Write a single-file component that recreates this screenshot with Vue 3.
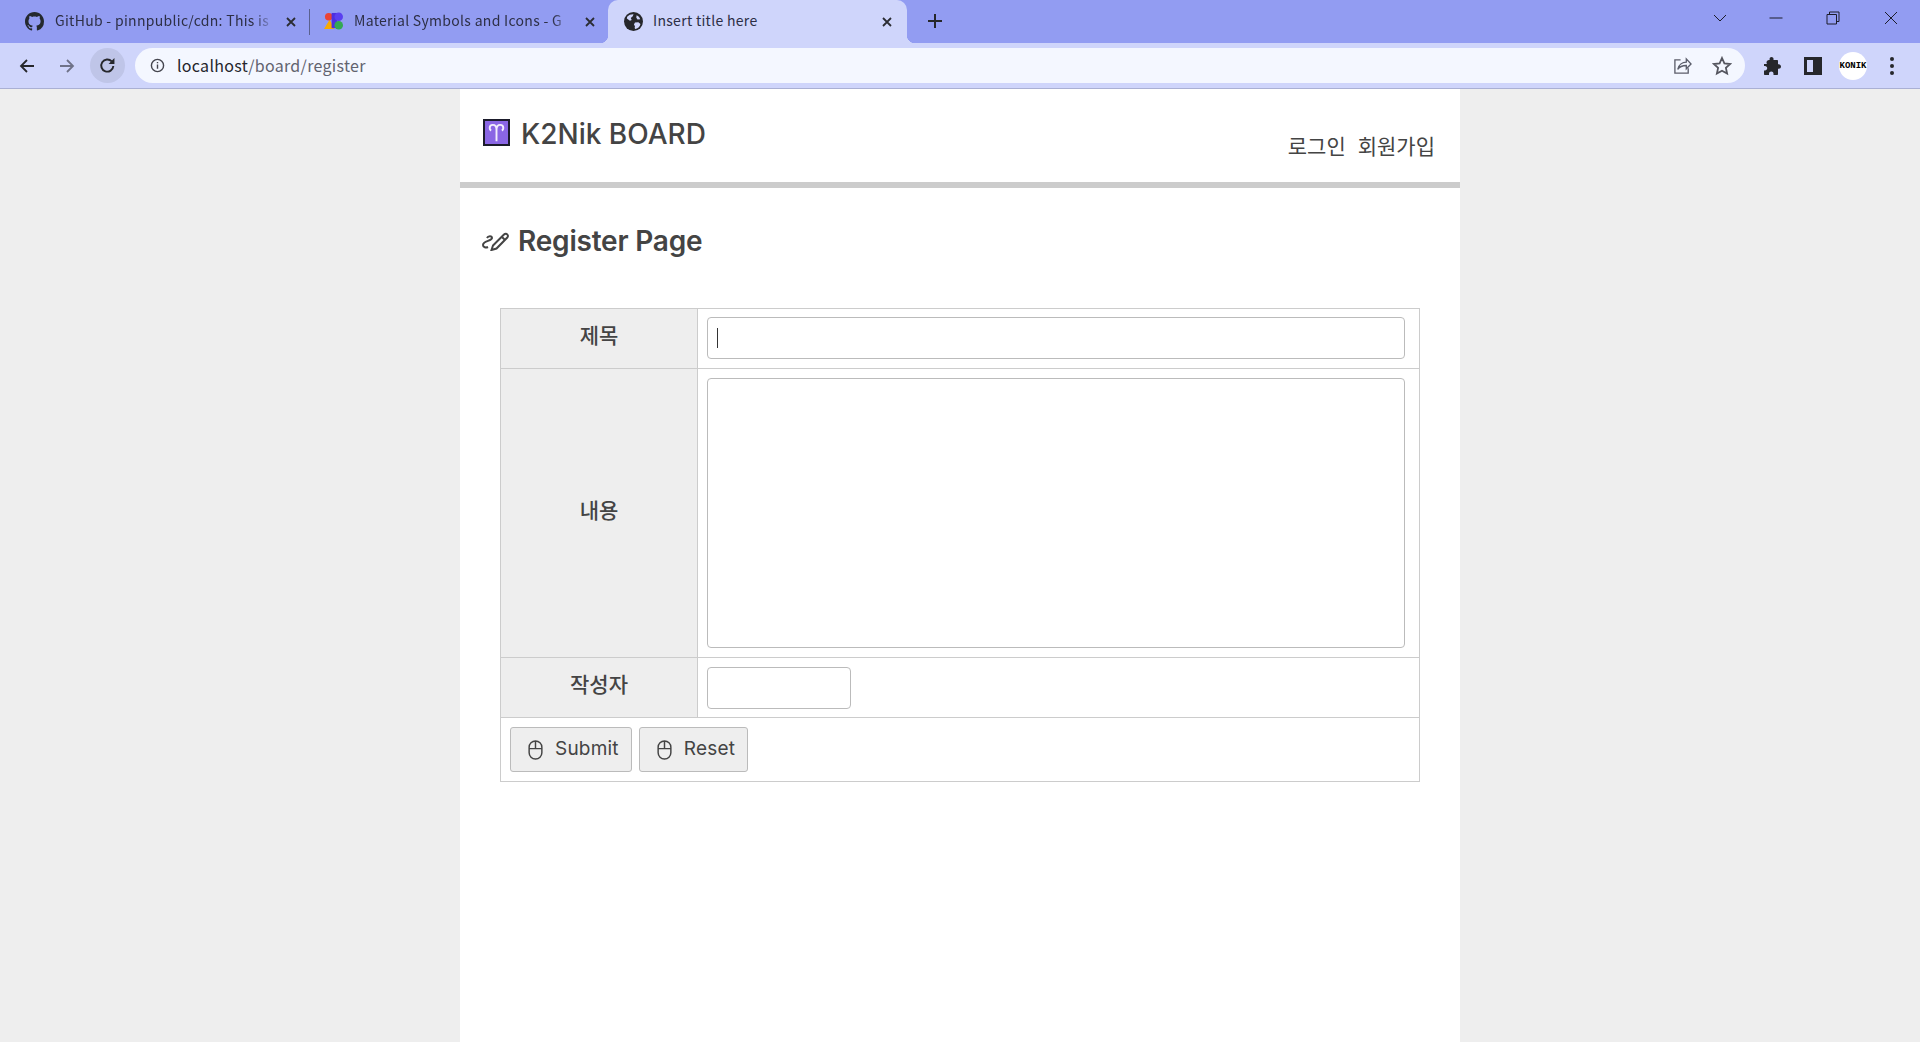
<template>
  <div class="browser">
    <div class="tabstrip">
      <div class="tab tab-first">
        <svg class="favicon" viewBox="0 0 16 16"><path fill="#24292f" d="M8 0C3.58 0 0 3.58 0 8c0 3.54 2.29 6.53 5.47 7.59.4.07.55-.17.55-.38 0-.19-.01-.82-.01-1.49-2.01.37-2.53-.49-2.69-.94-.09-.23-.48-.94-.82-1.13-.28-.15-.68-.52-.01-.53.63-.01 1.08.58 1.23.82.72 1.21 1.87.87 2.33.66.07-.52.28-.87.51-1.07-1.78-.2-3.64-.89-3.64-3.95 0-.87.31-1.59.82-2.15-.08-.2-.36-1.02.08-2.12 0 0 .67-.21 2.2.82.64-.18 1.32-.27 2-.27s1.36.09 2 .27c1.53-1.04 2.2-.82 2.2-.82.44 1.1.16 1.92.08 2.12.51.56.82 1.27.82 2.15 0 3.07-1.87 3.75-3.65 3.95.29.25.54.73.54 1.48 0 1.07-.01 1.93-.01 2.2 0 .21.15.46.55.38A8.01 8.01 0 0 0 16 8c0-4.42-3.58-8-8-8z"/></svg>
        <span class="tab-title">GitHub - pinnpublic/cdn: This is</span>
        <svg class="tab-close" viewBox="0 0 12 12"><path d="M2 2l8 8M10 2l-8 8"/></svg>
      </div>
      <div class="tab-sep"></div>
      <div class="tab tab-second">
        <svg class="favicon" viewBox="0 0 20 20">
          <path fill="#f9ab00" d="M6 8l5 10H0z"/>
          <circle fill="#ea4335" cx="5" cy="5" r="4"/>
          <rect fill="#4b2fe0" x="8" y="1" width="6" height="16"/>
          <circle fill="#34a853" cx="15.500" cy="14" r="4.500"/>
          <circle fill="#5a3ff0" cx="15.500" cy="5" r="4.500"/>
        </svg>
        <span class="tab-title">Material Symbols and Icons - G</span>
        <svg class="tab-close" viewBox="0 0 12 12"><path d="M2 2l8 8M10 2l-8 8"/></svg>
      </div>
      <div class="tab tab-active">
        <svg class="favicon" viewBox="0 0 18 18">
          <circle cx="9" cy="9" r="9" fill="#26272b"/>
          <path fill="#cfd5fb" d="M3 4.500c1.500-1.600 3.600-2.400 6-2.300L8.300 4 6.400 5.600l.9 1.900-1.700.7-2.900-2zM11 16c-1-.2-1-1.400-.6-2.600l-1-1.600 1-1.800 3.200-.2 2 1.600c-.4 2.200-2.200 4.200-4.600 4.600zM12 3c1.600.7 2.900 2 3.400 3.800l-2.600.2-1.200-1.800z"/>
        </svg>
        <span class="tab-title tab-title-full">Insert title here</span>
        <svg class="tab-close" viewBox="0 0 12 12"><path d="M2 2l8 8M10 2l-8 8"/></svg>
      </div>
      <svg class="new-tab" viewBox="0 0 16 16"><path d="M8 1v14M1 8h14"/></svg>
      <div class="window-btns">
        <svg class="win-chevron" viewBox="0 0 14 8"><path d="M1 1l6 6 6-6"/></svg>
        <svg class="win-icon win-min" viewBox="0 0 14 14"><path d="M0.500 7h13"/></svg>
        <svg class="win-icon win-restore" viewBox="0 0 14 14"><path d="M1 3.500h9.500V13H1zM3.500 3.500V1H13v9.500h-2.500"/></svg>
        <svg class="win-icon" viewBox="0 0 14 14"><path d="M1 1l12 12M13 1L1 13"/></svg>
      </div>
    </div>

    <div class="toolbar">
      <svg class="nav-icon" viewBox="0 0 16 16"><path class="nav-dark" d="M15 8H2M8 2L2 8l6 6"/></svg>
      <svg class="nav-icon nav-forward" viewBox="0 0 16 16"><path class="nav-faded" d="M1 8h13M8 2l6 6-6 6"/></svg>
      <div class="reload">
        <svg viewBox="0 0 16 16"><path class="nav-dark" d="M13.500 8.500a5.700 5.700 0 1 1-1.500-4.300"/><path fill="#26272b" d="M14.500 1v5.500H9z"/></svg>
      </div>
      <div class="omnibox">
        <svg class="info" viewBox="0 0 16 16"><circle cx="8" cy="8" r="6.500"/><path d="M8 7v4.500M8 4.200v1.300"/></svg>
        <span class="url"><span class="url-host">localhost</span>/board/register</span>
        <svg class="omni-share" viewBox="0 0 20 20"><path d="M8 4H2v14h14v-5"/><path d="M5 14c1-5 5-7.500 9-7.500V3l5 5.500-5 5V10c-4 0-7 1-9 4z"/></svg>
        <svg class="omni-star" viewBox="0 0 20 20"><path d="M10 2l2.400 5.400 5.800.6-4.300 3.900 1.200 5.700L10 14.700l-5.100 2.900 1.200-5.700L1.800 8l5.800-.6z"/></svg>
      </div>
      <svg class="puzzle" viewBox="0 0 18 18"><path fill="#26272b" d="M0 7h3.200c-.5-.4-.7-1-.7-1.600C2.500 4 3.600 3 5 3h.6V1.800C5.600.8 6.500 0 7.500 0s2 .8 2 1.800V3H13c.6 0 1 .4 1 1v3.200h.7c1.300 0 2.300 1 2.300 2.300s-1 2.300-2.300 2.300H14V17c0 .6-.4 1-1 1H9.500v-1.300c0-1.200-1-2.100-2.200-2.100S5 15.500 5 16.700V18H1c-.6 0-1-.4-1-1v-3.600h1c1.200 0 2.200-1 2.200-2.200S2.200 9 1 9H0z"/></svg>
      <svg class="panel" viewBox="0 0 18 18"><path fill="#26272b" fill-rule="evenodd" d="M0 0h18v18H0zM3 3v12h6V3z"/></svg>
      <div class="avatar">KONIK</div>
      <div class="dots"><i></i><i></i><i></i></div>
    </div>
  </div>

  <div class="page">
    <header class="site-header">
      <h1 class="logo"><span class="aries"><svg viewBox="0 0 24 24"><path d="M12 21V9c0-3 1.500-5 3.800-5 2 0 3.300 1.400 3.300 3.200 0 1.300-.6 2.200-1.500 2.800M12 9c0-3-1.500-5-3.800-5C6.200 4 4.900 5.400 4.900 7.200c0 1.300.6 2.200 1.500 2.800"/></svg></span><span class="logo-text">K2Nik BOARD</span></h1>
      <nav class="site-nav">
        <a>로그인</a>
        <a>회원가입</a>
      </nav>
    </header>

    <h2 class="page-title">
      <svg viewBox="0 0 28 20"><path d="M6 7c1-2 5-2.500 5 0 0 3-9 3-9 7 0 2.500 3 3 5 2"/><path d="M12 14.500 23 3.500c1-1 2.500-1 3.300 0s.7 2.200 0 3L15.500 17.500l-5 1.500zM21 6l3 3"/></svg>
      Register Page
    </h2>

    <form class="board-form" @submit.prevent>
      <table>
        <tbody>
          <tr class="row-title">
            <th>제목</th>
            <td><div class="fake-input"><span class="caret"></span></div></td>
          </tr>
          <tr>
            <th>내용</th>
            <td><textarea class="content-box"></textarea></td>
          </tr>
          <tr class="row-writer">
            <th>작성자</th>
            <td><input class="writer" type="text" /></td>
          </tr>
          <tr>
            <td class="actions" colspan="2">
              <button v-for="b in buttons" :key="b" type="button">
                <svg viewBox="0 0 16 22"><rect x="1" y="1" width="14" height="20" rx="7"/><path d="M1 9.500h14M8 1v8.500"/></svg>
                <span class="btn-label">{{ b }}</span>
              </button>
            </td>
          </tr>
        </tbody>
      </table>
    </form>
  </div>
</template>

<script setup>
const buttons = ['Submit', 'Reset']
</script>

<style>
html, body {
  margin: 0;
  background: #eee;
  overflow: hidden;
}
</style>

<style scoped>
.browser {
  font-family: "Noto Sans CJK KR", "Noto Sans", sans-serif;
}

.tabstrip {
  height: 43px;
  display: flex;
  align-items: stretch;
  background: #929cf2;
  padding-left: 9px;
}

.tab {
  position: relative;
  display: flex;
  align-items: center;
  box-sizing: border-box;
  padding: 0 12px 0 16px;
  font-size: 14px;
  letter-spacing: 0.3px;
  color: #2d2f45;
}

.tab-first { width: 300px; }
.tab-second { width: 298px; padding-left: 14px; }

.tab-sep {
  width: 1px;
  height: 26px;
  margin-top: 9px;
  background: #5a618f;
}

.tab-active {
  width: 299px;
  background: #cfd5fb;
  border-radius: 10px 10px 0 0;
  padding-left: 16px;
  padding-right: 14px;
}

.tab-active::before,
.tab-active::after {
  content: "";
  position: absolute;
  bottom: 0;
  width: 8px;
  height: 8px;
}

.tab-active::before {
  left: -8px;
  background: radial-gradient(circle at 0 0, #929cf2 8px, #cfd5fb 8.500px);
}

.tab-active::after {
  right: -8px;
  background: radial-gradient(circle at 100% 0, #929cf2 8px, #cfd5fb 8.500px);
}

.favicon {
  width: 19px;
  height: 19px;
  flex: none;
  margin-right: 11px;
}

.tab-active .favicon {
  margin-right: 10px;
}

.tab-title {
  flex: 1;
  min-width: 0;
  padding-bottom: 3px;
  white-space: nowrap;
  -webkit-mask-image: linear-gradient(to right, #000 90%, transparent 100%);
  mask-image: linear-gradient(to right, #000 90%, transparent 100%);
}

.tab-title-full {
  -webkit-mask-image: none;
  mask-image: none;
}

.tab-close {
  width: 12px;
  height: 12px;
  flex: none;
  margin-left: 10px;
  fill: none;
  stroke: #2b2c33;
  stroke-width: 1.800;
}

.new-tab {
  width: 16px;
  height: 16px;
  margin: 13px 0 0 20px;
  fill: none;
  stroke: #26272b;
  stroke-width: 2;
}

.window-btns {
  margin-left: auto;
  display: flex;
  align-items: flex-start;
  padding-top: 11px;
  padding-right: 22px;
}

.win-icon {
  width: 14px;
  height: 14px;
  margin-left: 44px;
  fill: none;
  stroke: #1c1d2a;
  stroke-width: 1;
}

.win-min { margin-left: 42px; }
.win-restore { margin-left: 43px; }

.win-chevron {
  width: 14px;
  height: 8px;
  margin-top: 3px;
  fill: none;
  stroke: #1c1d2a;
  stroke-width: 1;
}

.toolbar {
  height: 46px;
  box-sizing: border-box;
  display: flex;
  align-items: center;
  background: #cfd5fb;
  border-bottom: 1px solid #aab0d4;
  padding: 0 20px 0 19px;
}

.nav-icon {
  width: 16px;
  height: 16px;
  flex: none;
  fill: none;
}

.nav-forward {
  margin-left: 24px;
}

.nav-dark {
  fill: none;
  stroke: #26272b;
  stroke-width: 1.800;
}

.nav-faded {
  stroke: #6f7288;
  stroke-width: 1.800;
}

.reload {
  width: 35px;
  height: 35px;
  margin-left: 15px;
  flex: none;
  display: flex;
  align-items: center;
  justify-content: center;
  border-radius: 50%;
  background: #bfc5e8;
}

.reload svg {
  width: 17px;
  height: 17px;
}

.omnibox {
  width: 1610px;
  height: 35px;
  margin-left: 10px;
  flex: none;
  box-sizing: border-box;
  display: flex;
  align-items: center;
  background: #f4f7ff;
  border-radius: 18px;
  padding: 0 13px 0 15px;
}

.info {
  width: 15px;
  height: 15px;
  fill: none;
  stroke: #45464f;
  stroke-width: 1.500;
}

.url {
  margin-left: 12px;
  padding-bottom: 2px;
  font-size: 16px;
  letter-spacing: 0.3px;
  color: #62636f;
}

.url-host {
  color: #24252c;
}

.omni-share {
  width: 19px;
  height: 19px;
  margin-left: auto;
  fill: none;
  stroke: #5c5e6b;
  stroke-width: 1.400;
}

.omni-star {
  width: 20px;
  height: 20px;
  margin-left: 20px;
  fill: none;
  stroke: #55565f;
  stroke-width: 1.800;
}

.puzzle {
  width: 18px;
  height: 18px;
  margin-left: 19px;
  flex: none;
}

.panel {
  width: 18px;
  height: 18px;
  margin-left: 22px;
  flex: none;
}

.avatar {
  width: 28px;
  height: 28px;
  margin-left: 17px;
  flex: none;
  border-radius: 50%;
  background: #fff;
  color: #000;
  font-family: "Liberation Mono", monospace;
  font-size: 9px;
  font-weight: 700;
  line-height: 28px;
  text-align: center;
}

.dots {
  margin-left: 23px;
  display: flex;
  flex-direction: column;
  gap: 3px;
}

.dots i {
  display: block;
  width: 4px;
  height: 4px;
  border-radius: 50%;
  background: #26272b;
}

.page {
  width: 1000px;
  height: 953px;
  margin: 0 auto;
  background: #fff;
  color: #444;
  font-family: Inter, "Noto Sans CJK KR", sans-serif;
}

.site-header {
  height: 99px;
  box-sizing: border-box;
  display: flex;
  justify-content: space-between;
  border-bottom: 6px solid #ccc;
  padding: 0 25px 0 23px;
}

.logo {
  display: flex;
  align-items: center;
  height: 27px;
  margin: 30px 0 0;
  font-size: 28px;
  font-weight: 500;
}

.logo-text {
  padding-top: 2px;
}

.aries {
  width: 27px;
  height: 27px;
  margin-right: 11px;
  box-sizing: border-box;
  border: 2px solid #1b1b2b;
  background: #8a66e4;
  display: flex;
}

.aries svg {
  width: 23px;
  height: 23px;
  fill: none;
  stroke: #f2eefc;
  stroke-width: 2;
}

.site-nav {
  display: flex;
  gap: 12px;
  margin-top: 42px;
  font-family: "Noto Sans CJK KR", sans-serif;
  font-size: 21px;
  line-height: 28px;
}

.page-title {
  display: flex;
  align-items: center;
  height: 30px;
  margin: 38px 0 0 21px;
  font-size: 28px;
  font-weight: 600;
  letter-spacing: -0.2px;
}

.page-title svg {
  width: 28px;
  height: 20px;
  margin-right: 9px;
  fill: none;
  stroke: #444;
  stroke-width: 2;
}

.board-form {
  margin-top: 52px;
  padding: 0 40px;
}

table {
  width: 920px;
  border-collapse: collapse;
  table-layout: fixed;
  font-family: "Noto Sans CJK KR", sans-serif;
}

th, td {
  border: 1px solid #ccc;
  padding: 9px 14px 9px 9px;
  box-sizing: border-box;
}

th {
  width: 197px;
  padding: 0 0 9px;
  background: #eee;
  font-size: 21px;
  font-weight: 500;
  color: #444;
}

.row-title td {
  padding-top: 8px;
}

.row-writer td {
  padding-bottom: 8px;
}

.fake-input,
.content-box,
.writer {
  display: block;
  box-sizing: border-box;
  border: 1px solid #bbb;
  border-radius: 4px;
  background: #fff;
  margin: 0;
  padding: 0;
  outline: 0;
}

.fake-input {
  width: 698px;
  height: 42px;
  display: flex;
  align-items: center;
  padding-left: 9px;
}

.caret {
  width: 1px;
  height: 20px;
  background: #333;
}

.content-box {
  width: 698px;
  height: 270px;
  resize: none;
}

.writer {
  width: 144px;
  height: 42px;
}

.actions {
  padding: 9px;
}

button {
  height: 45px;
  margin: 0 7px 0 0;
  padding: 0 12px 0 17px;
  display: inline-flex;
  align-items: center;
  vertical-align: top;
  border: 1px solid #bbb;
  border-radius: 3px;
  background: #eee;
  color: #444;
  font-family: Inter, sans-serif;
  font-size: 19px;
  letter-spacing: 0.2px;
}

.btn-label {
  padding-bottom: 3px;
}

button svg {
  width: 15px;
  height: 20px;
  margin-right: 12px;
  fill: none;
  stroke: #444;
  stroke-width: 1.600;
}
</style>
